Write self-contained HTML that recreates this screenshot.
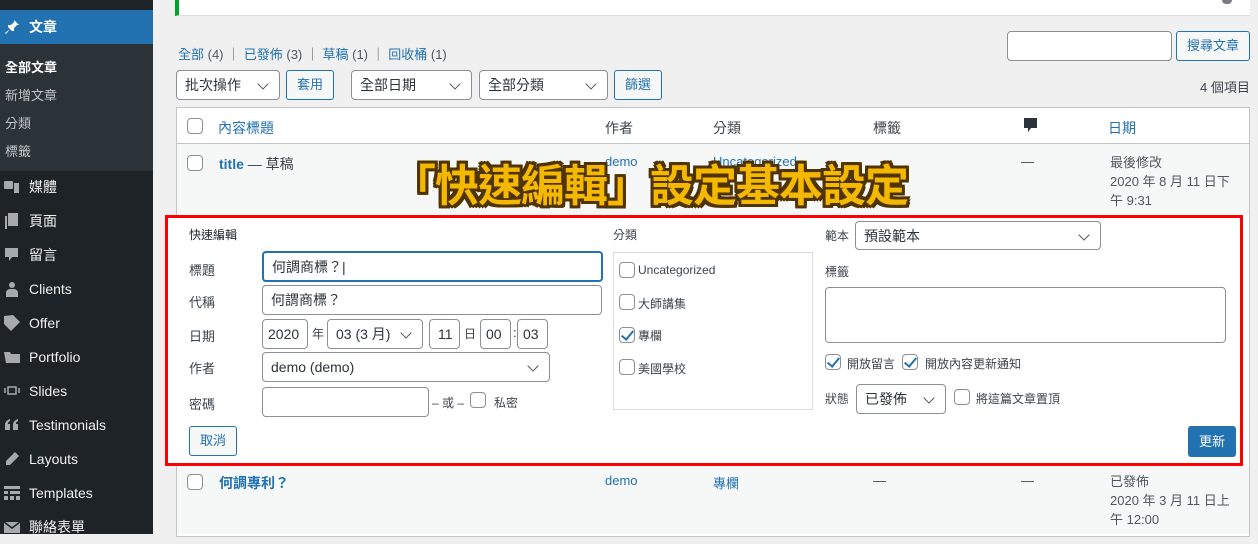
<!DOCTYPE html>
<html><head><meta charset="utf-8"><style>
*{box-sizing:border-box;margin:0;padding:0}
body{width:1258px;height:534px;overflow:hidden;background:#f0f0f1;font-family:"Liberation Sans","Noto Sans CJK TC",sans-serif;font-size:13px;color:#3c434a;position:relative}
.a{position:absolute;white-space:nowrap}
#sb{position:absolute;left:0;top:0;width:153px;height:534px;background:#1d2327}
.mi{position:absolute;left:0;width:153px;height:34px;color:#f0f0f1;font-size:14px;line-height:34px;padding-left:29px}
.ic{position:absolute;left:4px;top:9px;width:16px;height:16px}
.lk{color:#2271b1}
.inp{position:absolute;background:#fff;border:1px solid #8c8f94;border-radius:4px;font-size:14px;color:#2c3338;padding-left:8px;line-height:28px}
.sel:after{content:"";position:absolute;right:12px;top:9px;width:7px;height:7px;border-right:1.5px solid #50575e;border-bottom:1.5px solid #50575e;transform:rotate(45deg)}
.btn{position:absolute;border:1px solid #2271b1;border-radius:3px;color:#2271b1;background:#f6f7f7;text-align:center;font-size:13px}
.cb{position:absolute;width:16px;height:16px;border:1px solid #8c8f94;border-radius:4px;background:#fff}
.ck:after{content:"";position:absolute;left:4px;top:0px;width:5px;height:10px;border-right:2px solid #2271b1;border-bottom:2px solid #2271b1;transform:rotate(40deg)}
</style></head><body>
<div id="sb">
 <div class="mi" style="top:10px;height:34px;line-height:34px;background:#2271b1;color:#fff;font-weight:bold"><svg class="ic" viewBox="0 0 16 16"><path d="M10 1l5 5-2 0-3 3 0 3-2 0-2-2-4 5-1-1 5-4-2-2 0-2 3 0 3-3z" fill="#fff"/></svg>文章</div>
 <div class="a" style="left:145px;top:19px;width:0;height:0;border:8px solid transparent;border-right-color:#f0f0f1"></div>
 <div class="a" style="left:0;top:44px;width:153px;height:127px;background:#2c3338"></div>
 <div class="a" style="left:5px;top:57px;color:#fff;font-weight:bold">全部文章</div>
 <div class="a" style="left:5px;top:85px;color:#c3c4c7">新增文章</div>
 <div class="a" style="left:5px;top:113px;color:#c3c4c7">分類</div>
 <div class="a" style="left:5px;top:141px;color:#c3c4c7">標籤</div>
 <div class="mi" style="top:170px">
  <svg class="ic" viewBox="0 0 16 16" fill="#a7aaad"><rect x="0" y="2" width="9" height="8" rx="1"/><rect x="10" y="4" width="5" height="10"/></svg>媒體</div>
 <div class="mi" style="top:204px"><svg class="ic" viewBox="0 0 16 16" fill="#a7aaad"><rect x="4" y="0" width="10" height="13"/><rect x="1" y="3" width="2" height="13"/></svg>頁面</div>
 <div class="mi" style="top:238px"><svg class="ic" viewBox="0 0 16 16" fill="#a7aaad"><path d="M1 1h13v9H8l-3 4v-4H1z"/></svg>留言</div>
 <div class="mi" style="top:272px"><svg class="ic" viewBox="0 0 16 16" fill="#a7aaad"><circle cx="8" cy="4" r="3"/><path d="M2 16v-4a4 4 0 0 1 4-4h4a4 4 0 0 1 4 4v4z"/></svg>Clients</div>
 <div class="mi" style="top:306px"><svg class="ic" viewBox="0 0 16 16" fill="#a7aaad"><path d="M9 0l7 7-9 9-7-7V1z"/></svg>Offer</div>
 <div class="mi" style="top:340px"><svg class="ic" viewBox="0 0 16 16" fill="#a7aaad"><path d="M0 3h6l1 2h9v9H2z"/></svg>Portfolio</div>
 <div class="mi" style="top:374px"><svg class="ic" viewBox="0 0 16 16" fill="none" stroke="#a7aaad" stroke-width="1.5"><rect x="4" y="4" width="8" height="7"/><path d="M1 5v5M15 5v5"/></svg>Slides</div>
 <div class="mi" style="top:408px"><svg class="ic" viewBox="0 0 16 16" fill="#a7aaad"><path d="M1 13V8c0-3 2-5 5-6v2c-2 1-2 2-2 3h2v6zM9 13V8c0-3 2-5 5-6v2c-2 1-2 2-2 3h2v6z"/></svg>Testimonials</div>
 <div class="mi" style="top:442px"><svg class="ic" viewBox="0 0 16 16" fill="#a7aaad"><path d="M11 1l4 4-9 9H2v-4z"/></svg>Layouts</div>
 <div class="mi" style="top:476px"><svg class="ic" viewBox="0 0 16 16" fill="#a7aaad"><rect x="0" y="1" width="16" height="3"/><rect x="0" y="6" width="4" height="3"/><rect x="6" y="6" width="10" height="3"/><rect x="0" y="11" width="4" height="4"/><rect x="6" y="11" width="4" height="4"/><rect x="12" y="11" width="4" height="4"/></svg>Templates</div>
 <div class="mi" style="top:510px"><svg class="ic" viewBox="0 0 16 16" fill="#a7aaad"><path d="M0 3h16v11H0z"/><path d="M0 3l8 6 8-6" stroke="#1d2327" stroke-width="1.5" fill="none"/></svg>聯絡表單</div>
</div>

<div class="a" style="left:175px;top:0;width:1075px;height:16px;background:#fff;border-left:4px solid #00a32a;border-bottom:1px solid #dcdcde"></div>
<div class="a" style="left:1222px;top:-4px;width:10px;height:8px;border-radius:5px;background:#787c82"></div>

<div class="a" style="left:178px;top:44px;color:#50575e"><span class="lk">全部</span> (4) ｜ <span class="lk">已發佈</span> (3) ｜ <span class="lk">草稿</span> (1) ｜ <span class="lk">回收桶</span> (1)</div>
<div class="inp" style="left:1007px;top:31px;width:165px;height:30px"></div>
<div class="btn" style="left:1176px;top:31px;width:74px;height:30px;line-height:28px">搜尋文章</div>
<div class="inp sel" style="left:176px;top:70px;width:104px;height:30px">批次操作</div>
<div class="btn" style="left:286px;top:70px;width:48px;height:30px;line-height:28px">套用</div>
<div class="inp sel" style="left:351px;top:70px;width:121px;height:30px">全部日期</div>
<div class="inp sel" style="left:479px;top:70px;width:129px;height:30px">全部分類</div>
<div class="btn" style="left:614px;top:70px;width:48px;height:30px;line-height:28px">篩選</div>
<div class="a" style="left:1200px;top:77px;color:#3c434a">4 個項目</div>

<div class="a" style="left:176px;top:107px;width:1074px;height:430px;background:#fff;border:1px solid #c3c4c7"></div>
<div class="a" style="left:177px;top:143px;width:1072px;height:1px;background:#c3c4c7"></div>
<div class="a" style="left:177px;top:144px;width:1072px;height:70px;background:#f6f7f7"></div>
<div class="a" style="left:177px;top:466px;width:1072px;height:68px;background:#f6f7f7"></div>
<div class="cb" style="left:187px;top:118px"></div>
<div class="a lk" style="left:218px;top:118px;font-size:14px">內容標題</div>
<div class="a" style="left:605px;top:118px;font-size:14px">作者</div>
<div class="a" style="left:713px;top:118px;font-size:14px">分類</div>
<div class="a" style="left:873px;top:118px;font-size:14px">標籤</div>
<svg class="a" style="left:1024px;top:118px" width="14" height="16" viewBox="0 0 14 16"><path d="M0 0h13v10H7l-3 4v-4H0z" fill="#2c3338"/></svg>
<div class="a lk" style="left:1108px;top:118px;font-size:14px">日期</div>

<div class="cb" style="left:187px;top:155px"></div>
<div class="a" style="left:219px;top:154px;font-size:14px"><b class="lk">title</b> — 草稿</div>
<div class="a lk" style="left:605px;top:154px">demo</div>
<div class="a lk" style="left:713px;top:154px">Uncategorized</div>
<div class="a" style="left:1021px;top:154px">—</div>
<div class="a" style="left:1110px;top:153px;line-height:19px;color:#50575e">最後修改<br>2020 年 8 月 11 日下<br>午 9:31</div>

<div class="a" style="left:392px;top:150px;font-size:44px;font-weight:bold;color:#f5b800;letter-spacing:-1px;text-shadow:-3px -3px 0 #4f3300,3px -3px 0 #4f3300,-3px 3px 0 #4f3300,3px 3px 0 #4f3300,0 3px 0 #4f3300,0 -3px 0 #4f3300,3px 0 0 #4f3300,-3px 0 0 #4f3300">「快速編輯」設定基本設定</div>

<div class="a" style="left:165px;top:215px;width:1078px;height:251px;background:#fff;border:3px solid #f00"></div>
<div class="a" style="left:189px;top:226px;font-size:12px;color:#1d2327">快速編輯</div>
<div class="a" style="left:189px;top:260px">標題</div>
<div class="inp" style="left:262px;top:251px;width:341px;height:31px;border:2px solid #2271b1;padding-left:8px">何調商標？|</div>
<div class="a" style="left:189px;top:292px">代稱</div>
<div class="inp" style="left:262px;top:285px;width:340px;height:30px">何謂商標？</div>
<div class="a" style="left:189px;top:326px">日期</div>
<div class="inp" style="left:262px;top:319px;width:46px;height:30px;padding-left:5px">2020</div>
<div class="a" style="left:312px;top:325px;font-size:12px">年</div>
<div class="inp sel" style="left:327px;top:319px;width:96px;height:30px">03 (3 月)</div>
<div class="inp" style="left:429px;top:319px;width:31px;height:30px;padding-left:8px">11</div>
<div class="a" style="left:464px;top:325px;font-size:12px">日</div>
<div class="inp" style="left:480px;top:319px;width:31px;height:30px;padding-left:5px">00</div>
<div class="a" style="left:513px;top:325px">:</div>
<div class="inp" style="left:517px;top:319px;width:31px;height:30px;padding-left:5px">03</div>
<div class="a" style="left:189px;top:358px">作者</div>
<div class="inp sel" style="left:262px;top:352px;width:288px;height:30px">demo (demo)</div>
<div class="a" style="left:189px;top:394px">密碼</div>
<div class="inp" style="left:262px;top:387px;width:167px;height:30px"></div>
<div class="a" style="left:432px;top:394px;font-size:12px">– 或 –</div>
<div class="cb" style="left:470px;top:392px"></div>
<div class="a" style="left:494px;top:394px;font-size:12px">私密</div>
<div class="btn" style="left:189px;top:426px;width:48px;height:30px;line-height:28px">取消</div>

<div class="a" style="left:613px;top:226px;font-size:12px">分類</div>
<div class="a" style="left:613px;top:252px;width:200px;height:158px;border:1px solid #dcdcde"></div>
<div class="cb" style="left:619px;top:262px"></div><div class="a" style="left:638px;top:263px;font-size:12px">Uncategorized</div>
<div class="cb" style="left:619px;top:294px"></div><div class="a" style="left:638px;top:295px;font-size:12px">大師講集</div>
<div class="cb ck" style="left:619px;top:327px"></div><div class="a" style="left:638px;top:327px;font-size:12px">專欄</div>
<div class="cb" style="left:619px;top:359px"></div><div class="a" style="left:638px;top:360px;font-size:12px">美國學校</div>

<div class="a" style="left:825px;top:227px;font-size:12px">範本</div>
<div class="inp sel" style="left:855px;top:221px;width:246px;height:29px">預設範本</div>
<div class="a" style="left:825px;top:263px;font-size:12px">標籤</div>
<div class="a" style="left:825px;top:287px;width:401px;height:56px;border:1px solid #8c8f94;border-radius:4px"></div>
<div class="cb ck" style="left:825px;top:354px"></div><div class="a" style="left:847px;top:355px;font-size:12px">開放留言</div>
<div class="cb ck" style="left:902px;top:354px"></div><div class="a" style="left:925px;top:355px;font-size:12px">開放內容更新通知</div>
<div class="a" style="left:825px;top:390px;font-size:12px">狀態</div>
<div class="inp sel" style="left:856px;top:384px;width:90px;height:30px">已發佈</div>
<div class="cb" style="left:954px;top:389px"></div><div class="a" style="left:976px;top:390px;font-size:12px">將這篇文章置頂</div>
<div class="a" style="left:1188px;top:426px;width:48px;height:31px;background:#2271b1;border-radius:3px;color:#fff;text-align:center;line-height:31px">更新</div>

<div class="cb" style="left:187px;top:474px"></div>
<div class="a lk" style="left:219px;top:473px;font-size:14px;font-weight:bold">何調專利？</div>
<div class="a lk" style="left:605px;top:473px">demo</div>
<div class="a lk" style="left:713px;top:473px">專欄</div>
<div class="a" style="left:873px;top:473px">—</div>
<div class="a" style="left:1021px;top:473px">—</div>
<div class="a" style="left:1110px;top:472px;line-height:19px;color:#50575e">已發佈<br>2020 年 3 月 11 日上<br>午 12:00</div>
</body></html>
